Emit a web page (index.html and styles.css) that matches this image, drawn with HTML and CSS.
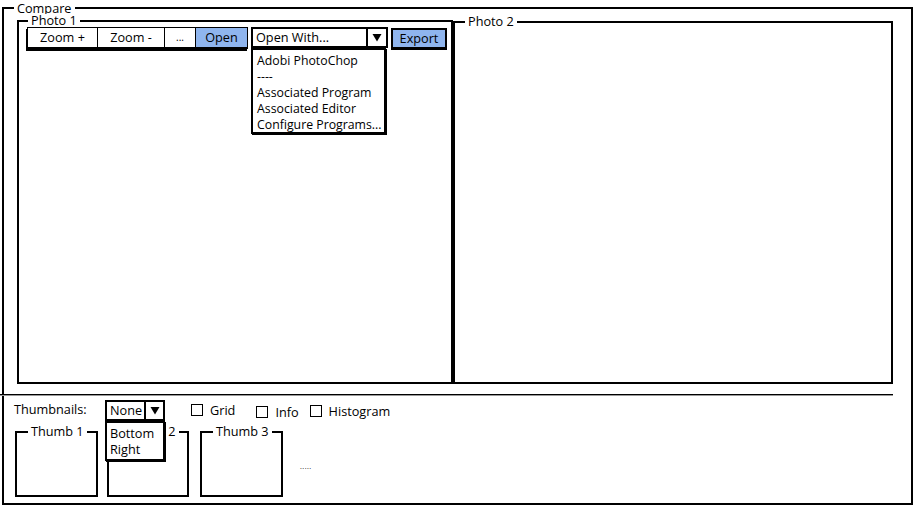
FILE: index.html
```html
<!DOCTYPE html>
<html>
<head>
<meta charset="utf-8">
<link rel="stylesheet" href="styles.css">
</head>
<body>
<div class="compare">
  <span class="legend legend-compare">Compare</span>
  <div class="photos">
    <div class="group photo1">
      <span class="legend">Photo 1</span>
      <div class="toolbar-row">
        <div class="buttonbar">
          <span class="tb-btn zoom-in">Zoom +</span>
          <span class="tb-btn zoom-out">Zoom -</span>
          <span class="tb-btn more">...</span>
          <span class="tb-btn open selected">Open</span>
        </div>
        <div class="combo openwith">
          <span class="combo-text">Open With...</span>
          <span class="combo-arrow"><svg width="10" height="9" viewBox="0 0 10 9"><path d="M0.5 1 L9.5 1 L5 8.5 Z" fill="#000"/></svg></span>
          <ul class="menu menu-openwith">
            <li>Adobi PhotoChop</li>
            <li>----</li>
            <li>Associated Program</li>
            <li>Associated Editor</li>
            <li>Configure Programs...</li>
          </ul>
        </div>
        <span class="btn export selected">Export</span>
      </div>
    </div>
    <div class="group photo2">
      <span class="legend">Photo 2</span>
    </div>
  </div>
  <div class="separator"></div>
  <div class="controls">
    <span class="thumb-label">Thumbnails:</span>
    <div class="combo none">
      <span class="combo-text">None</span>
      <span class="combo-arrow"><svg width="10" height="9" viewBox="0 0 10 9"><path d="M0.5 1 L9.5 1 L5 8.5 Z" fill="#000"/></svg></span>
      <ul class="menu menu-none">
        <li>Bottom</li>
        <li>Right</li>
      </ul>
    </div>
    <label class="check check-grid"><span class="box"></span>Grid</label>
    <label class="check check-info"><span class="box"></span>Info</label>
    <label class="check check-hist"><span class="box"></span>Histogram</label>
  </div>
  <div class="thumbs">
    <div class="group thumb thumb1"><span class="legend">Thumb 1</span></div>
    <div class="group thumb thumb2"><span class="legend">Thumb 2</span></div>
    <div class="group thumb thumb3"><span class="legend">Thumb 3</span></div>
    <span class="dots">.....</span>
  </div>
</div>
</body>
</html>
```

FILE: styles.css
```css
* { box-sizing: border-box; }

html, body {
  margin: 0;
  padding: 0;
  background: #fff;
}

body {
  width: 915px;
  height: 507px;
  overflow: hidden;
  font-family: "Open Sans", "DejaVu Sans", sans-serif;
  font-size: 12.7px;
  color: #000;
}

.compare {
  position: relative;
  margin: 7px 0 0 2px;
  width: 911px;
  height: 498px;
  border: 2px solid #000;
}

.group {
  position: relative;
  border: 2px solid #000;
}

.legend {
  position: absolute;
  top: -8px;
  left: 9px;
  padding: 0 3px;
  background: #fff;
  line-height: 12px;
  white-space: nowrap;
}

.legend-compare {
  left: 10px;
  top: -7px;
}

.photos {
  display: flex;
  align-items: flex-start;
  margin: 11px 0 0 13px;
}

.photo1 {
  width: 436px;
  height: 364px;
  padding: 5px 0 0 8px;
}

.photo2 {
  width: 440px;
  height: 363px;
  margin-top: 1px;
}

.photo2 .legend {
  left: 10px;
}

.toolbar-row {
  display: flex;
  align-items: flex-start;
}

.buttonbar {
  display: flex;
  height: 22px;
  border: 1px solid #000;
  border-bottom-width: 2px;
  box-shadow: -1px 2px 0 #000;
}

.tb-btn {
  display: flex;
  align-items: center;
  justify-content: center;
  height: 100%;
  border-left: 1px solid #000;
  line-height: 15px;
}

.tb-btn:first-child { border-left: none; }

.zoom-in { width: 69px; }
.zoom-out { width: 67px; }
.more { width: 31px; font-size: 10px; }
.open { width: 52px; }

.selected {
  background: #8fb5ee;
}

.combo {
  position: relative;
  display: flex;
  border: 2px solid #000;
  background: #fff;
}

.combo-text {
  flex: 1;
  padding-left: 3px;
  line-height: 17px;
}

.combo-arrow {
  display: flex;
  align-items: center;
  justify-content: center;
  border-left: 2px solid #000;
}

.openwith {
  margin-left: 3px;
  width: 137px;
  height: 21px;
}

.openwith .combo-arrow { width: 20px; }

.menu {
  position: absolute;
  z-index: 5;
  list-style: none;
  margin: 0;
  background: #fff;
  border: 2px solid #000;
  box-shadow: 1px 1px 0 #000;
  line-height: 16px;
}

.menu li { white-space: nowrap; }

.menu-openwith {
  top: 19px;
  left: -2px;
  width: 135px;
  height: 86px;
  padding: 3px 0 0 4px;
  font-size: 12.3px;
}

.export {
  display: flex;
  align-items: center;
  justify-content: center;
  margin: 1px 0 0 3px;
  width: 56px;
  height: 21px;
  border: 2px solid #000;
  box-shadow: 0 1px 0 #000;
  line-height: 15px;
}

.separator {
  margin: 10px 0 0 -4px;
  width: 893px;
  height: 0;
  border-top: 1px solid #000;
  border-bottom: 1px solid #999;
}

.controls {
  display: flex;
  align-items: center;
  margin: 3px 0 0 10px;
  height: 22px;
}

.thumb-label {
  width: 91px;
  line-height: 15px;
  margin-top: -2px;
}

.none {
  width: 60px;
  height: 21px;
}

.none .combo-arrow { width: 19px; }

.menu-none {
  top: 19px;
  left: -2px;
  width: 60px;
  height: 40px;
  padding: 2px 0 0 3px;
}

.check {
  display: flex;
  align-items: center;
  line-height: 15px;
}

.box {
  display: inline-block;
  width: 12px;
  height: 12px;
  border: 1.5px solid #000;
  margin-right: 7px;
}

.check-grid { margin-left: 26px; margin-top: 0; }
.check-info { margin-left: 21px; margin-top: 4px; }
.check-info .box { margin-top: -1px; }
.check-hist { margin-left: 11px; margin-top: 2px; }

.thumbs {
  display: flex;
  align-items: flex-start;
  margin: 10px 0 0 11px;
}

.thumb {
  width: 83px;
  height: 66px;
}

.thumb .legend { left: 11px; top: -8px; }

.thumb2 { margin-left: 9px; width: 82px; }
.thumb3 { margin-left: 11px; width: 83px; }

.dots {
  margin: 31px 0 0 17px;
  font-size: 7px;
  line-height: 10px;
  letter-spacing: 0.5px;
}
```
